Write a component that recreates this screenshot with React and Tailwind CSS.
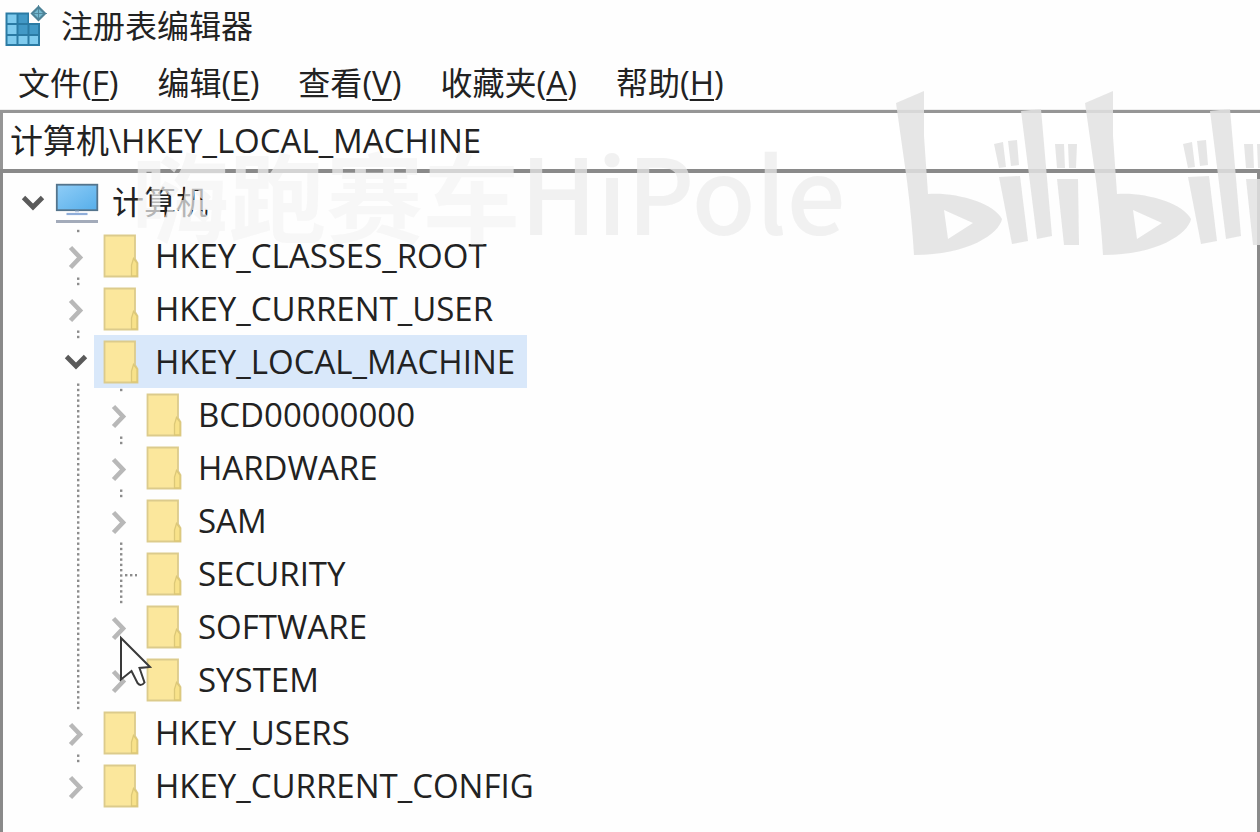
import { useState } from "react";

const FONT = "font-['Open_Sans','Noto_Sans_CJK_SC',sans-serif]";

const menus = [
  { label: "文件", key: "F" },
  { label: "编辑", key: "E" },
  { label: "查看", key: "V" },
  { label: "收藏夹", key: "A" },
  { label: "帮助", key: "H" },
];

const hives = [
  { name: "HKEY_CLASSES_ROOT" },
  { name: "HKEY_CURRENT_USER" },
  {
    name: "HKEY_LOCAL_MACHINE",
    children: [
      { name: "BCD00000000" },
      { name: "HARDWARE" },
      { name: "SAM" },
      { name: "SECURITY", leaf: true },
      { name: "SOFTWARE" },
      { name: "SYSTEM" },
    ],
  },
  { name: "HKEY_USERS" },
  { name: "HKEY_CURRENT_CONFIG" },
];

function Dots({ steps }) {
  return steps.map((k) => (
    <rect key={k} x="26" y={0.8 + k * 5.3} width="2.4" height="2.4" fill="#8c8c8c" />
  ));
}

const ALL = [0, 1, 2, 3, 4, 5, 6, 7, 8, 9];

function Guide({ steps, branch }) {
  return (
    <svg className="h-[53px] w-[43px] shrink-0" viewBox="0 0 43 53" aria-hidden="true">
      <Dots steps={steps} />
      {branch &&
        [31, 36, 41].map((x) => <rect key={x} x={x} y="27" width="2.4" height="2.4" fill="#8c8c8c" />)}
    </svg>
  );
}

function Toggle({ name, open, steps, onClick }) {
  return (
    <button type="button" aria-label={name} aria-expanded={open} onClick={onClick} className="shrink-0">
      <svg className="h-[53px] w-[43px]" viewBox="0 0 43 53" fill="none">
        <Dots steps={steps} />
        {open ? (
          <path d="M15.5 21.5L25 31L34.5 21.5" stroke="#5a5a5a" strokeWidth="4.8" />
        ) : (
          <path d="M19.5 18.5L29 28.5L19.5 38.5" stroke="#b8b8b8" strokeWidth="4.6" />
        )}
      </svg>
    </button>
  );
}

function Folder() {
  return (
    <svg className="h-[44px] w-[36px]" viewBox="0 0 36 44" aria-hidden="true">
      <path d="M1.5 1.5H32V25L34.5 29V42.5H1.5Z" fill="#fbe79c" stroke="#dccb8c" strokeWidth="1.8" />
      <path d="M28.5 42V31L30.5 24.5L34 29V42Z" fill="#f8e28a" stroke="#dcc878" strokeWidth="1.3" />
    </svg>
  );
}

function Monitor() {
  return (
    <svg className="h-[44px] w-[44px]" viewBox="0 0 44 44" aria-hidden="true">
      <defs>
        <linearGradient id="screen" x1="0" y1="0" x2="1" y2="1">
          <stop offset="0" stopColor="#8fcdf7" />
          <stop offset="1" stopColor="#56aeea" />
        </linearGradient>
      </defs>
      <rect x="1.8" y="3.7" width="40.5" height="25.5" fill="url(#screen)" stroke="#54748c" strokeWidth="1.8" />
      <path d="M20 30.5H24" stroke="#b9c9e2" strokeWidth="1.5" />
      <path d="M11.5 33H32.5" stroke="#8fadd9" strokeWidth="2.2" />
      <path d="M1 40.5H43" stroke="#a3abba" strokeWidth="2.8" />
    </svg>
  );
}

function RegeditLogo() {
  return (
    <svg className="h-[44px] w-[42px]" viewBox="0 0 42 44" aria-hidden="true">
      <path d="M0.5 7.5H24V18H35V41H0.5Z" fill="#2b7ba4" />
      <g fill="#7fcbee">
        <rect x="2.5" y="9.5" width="9" height="8.5" />
        <rect x="2.5" y="20" width="9" height="9" />
        <rect x="2.5" y="31" width="9" height="8" />
        <rect x="13.5" y="31" width="9" height="8" />
        <rect x="24.5" y="31" width="8.5" height="8" />
      </g>
      <g fill="#4299c6">
        <rect x="13.5" y="9.5" width="9" height="8.5" />
        <rect x="13.5" y="20" width="9" height="9" />
        <rect x="24.5" y="20" width="8.5" height="9" />
      </g>
      <path d="M33.5 2L40 8.5L33.5 15L27 8.5Z" fill="#74b8cf" stroke="#4d8297" strokeWidth="2.2" />
      <path d="M33.5 0V14M29 8.5H42" stroke="#4d8297" strokeWidth="0.9" />
    </svg>
  );
}

function Label({ name, icon, selected, onClick }) {
  return (
    <button
      type="button"
      onClick={onClick}
      className={`flex h-[53px] items-center pr-[12px] text-left ${selected ? "bg-[#d9e8fa]" : ""}`}
    >
      <span className={`flex w-[61px] shrink-0 ${icon === "pc" ? "pl-1" : "pl-[9px]"}`}>
        {icon === "pc" ? <Monitor /> : <Folder />}
      </span>
      <span className={`whitespace-nowrap ${icon === "pc" ? "pb-[2px] text-[32px]" : "text-[33px]"}`}>{name}</span>
    </button>
  );
}

function Glyph({ x }) {
  return (
    <g transform={`translate(${x} 0)`}>
      <path
        fillRule="evenodd"
        d="M0 12L28 0V45L32 103C60 101 98 112 106 128C103 143 72 164 18 164Q16 130 11 90ZM48 119L52 148L77 132Z"
      />
      <path d="M98 53L107 51L110 76L103 77ZM112 50L121 49L123 74L115 75Z" />
      <path d="M103 86L124 85L132 150L116 153Z" />
      <path d="M125 20L145 18L156 145L141 148Z" />
      <path d="M159 53H168L169 77H161ZM172 53H181L180 77H173Z" />
      <path d="M161 88H182L183 154H168Z" />
    </g>
  );
}

export default function App() {
  const [open, setOpen] = useState({ root: true, HKEY_LOCAL_MACHINE: true });
  const [selected, setSelected] = useState("HKEY_LOCAL_MACHINE");
  const flip = (id) => setOpen((o) => ({ ...o, [id]: !o[id] }));
  const path = selected === "计算机" ? selected : "计算机\\" + selected;

  return (
    <div className={`relative flex min-h-screen flex-col overflow-hidden bg-[#fefefe] text-[32px] leading-10 text-[#222] ${FONT}`}>
      <header className="flex h-[54px] items-center pl-[5px]">
        <RegeditLogo />
        <h1 className="pb-[2px] pl-[14px]">注册表编辑器</h1>
      </header>
      <nav className="flex h-[56px] items-center gap-[39px] border-b border-[#eee] pt-[2px] pl-[18px]">
        {menus.map((m) => (
          <button key={m.key} type="button" className="whitespace-nowrap">
            {m.label}
            <span className="text-[33px]">
              (<span className="underline decoration-2 underline-offset-4">{m.key}</span>)
            </span>
          </button>
        ))}
      </nav>
      <input
        aria-label="地址"
        value={path}
        readOnly
        className="h-[59px] w-full border-t-3 border-l-3 border-[#969696] bg-white pb-[4px] pl-[7px] text-[33px] outline-none"
      />
      <main className="flex-1 border-x-3 border-t-4 border-[#8a8a8a] pt-[3px] pl-[5px]">
        <ul>
          <li>
            <div className="flex">
              <Toggle name="计算机" open={open.root} steps={[]} onClick={() => flip("root")} />
              <Label name="计算机" icon="pc" selected={selected === "计算机"} onClick={() => setSelected("计算机")} />
            </div>
            {open.root && (
              <ul>
                {hives.map((h, i) => (
                  <li key={h.name}>
                    <div className="flex pl-[43px]">
                      <Toggle
                        name={h.name}
                        open={!!open[h.name]}
                        steps={i === hives.length - 1 ? [0] : [0, 9]}
                        onClick={() => flip(h.name)}
                      />
                      <Label name={h.name} selected={selected === h.name} onClick={() => setSelected(h.name)} />
                    </div>
                    {h.children && open[h.name] && (
                      <ul>
                        {h.children.map((c, j) => (
                          <li key={c.name} className="flex pl-[43px]">
                            <Guide steps={ALL} />
                            {c.leaf ? (
                              <Guide steps={ALL} branch />
                            ) : (
                              <Toggle
                                name={c.name}
                                open={!!open[c.name]}
                                steps={j === h.children.length - 1 ? [0] : [0, 9]}
                                onClick={() => flip(c.name)}
                              />
                            )}
                            <Label name={c.name} selected={selected === c.name} onClick={() => setSelected(c.name)} />
                          </li>
                        ))}
                      </ul>
                    )}
                  </li>
                ))}
              </ul>
            )}
          </li>
        </ul>
      </main>

      <div className="pointer-events-none absolute top-[120px] left-[132px] flex items-baseline text-[97px] leading-[140px] whitespace-nowrap font-['Noto_Sans_CJK_SC',sans-serif]">
        <span className="font-bold text-[#f3f4f3]/70">嗨跑赛车</span>
        <span className="text-[104px] font-medium text-[#ebebeb]/70">HiPole</span>
      </div>
      <svg className="pointer-events-none absolute top-[91px] left-[896px] h-[170px] w-[400px]" viewBox="0 0 400 170" fill="#e2e2e2" fillOpacity="0.86" aria-hidden="true">
        <Glyph x={0} />
        <Glyph x={189} />
      </svg>
      <svg className="pointer-events-none absolute top-[635px] left-[119px] h-[54px] w-[36px]" viewBox="0 0 36 54" aria-hidden="true">
        <path d="M2 3V44.5L12.5 36L18.5 48Q22 52 25.5 47.5L20.5 33L31 32Z" fill="#fff" stroke="#3a3a3a" strokeWidth="2" />
      </svg>
    </div>
  );
}
